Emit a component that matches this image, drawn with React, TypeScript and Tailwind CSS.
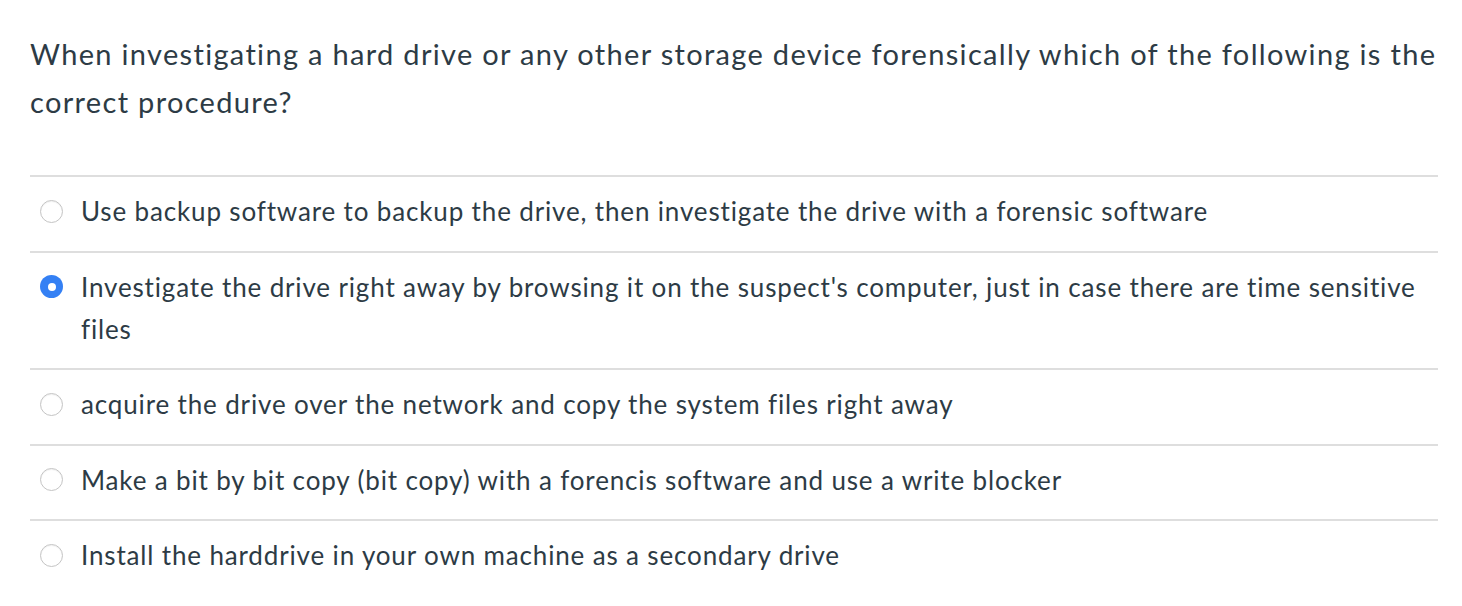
import React from 'react';

interface Option {
  text: string;
  selected?: boolean;
}

const options: Option[] = [
  { text: 'Use backup software to backup the drive, then investigate the drive with a forensic software' },
  {
    text: "Investigate the drive right away by browsing it on the suspect's computer, just in case there are time sensitive files",
    selected: true,
  },
  { text: 'acquire the drive over the network and copy the system files right away' },
  { text: 'Make a bit by bit copy (bit copy) with a forencis software and use a write blocker' },
  { text: 'Install the harddrive in your own machine as a secondary drive' },
];

const Radio: React.FC<{ selected?: boolean }> = ({ selected }) =>
  selected ? (
    <span className="flex h-[23px] w-[23px] items-center justify-center rounded-full bg-[#3480f4]">
      <span className="h-[8px] w-[8px] rounded-full bg-white" />
    </span>
  ) : (
    <span className="h-[23px] w-[23px] rounded-full border border-[#c4c4c4] bg-white shadow-[inset_0_1px_1px_rgba(0,0,0,0.06)]" />
  );

const App: React.FC = () => {
  return (
    <div className="min-h-screen bg-white pl-[30px] pr-[24px] pt-[30px] font-['Lato','Noto_Sans',sans-serif] text-[#2d3b45]">
      <p className="text-[29px] leading-[48px] tracking-[1.32px]">
        When investigating a hard drive or any other storage device forensically which of the following is the correct
        procedure?
      </p>

      {/* Answers */}
      <div className="mt-[49px]">
        {options.map((opt, i) => (
          <div
            key={i}
            className="flex items-start border-t-2 border-[#dedede] pb-[18.5px] pt-[13px]"
          >
            <div className="flex h-[42px] w-[51px] shrink-0 items-center pl-[10px]">
              <Radio selected={opt.selected} />
            </div>
            <span className="text-[26px] leading-[42px] tracking-[0.85px]">{opt.text}</span>
          </div>
        ))}
      </div>
    </div>
  );
};

export default App;
